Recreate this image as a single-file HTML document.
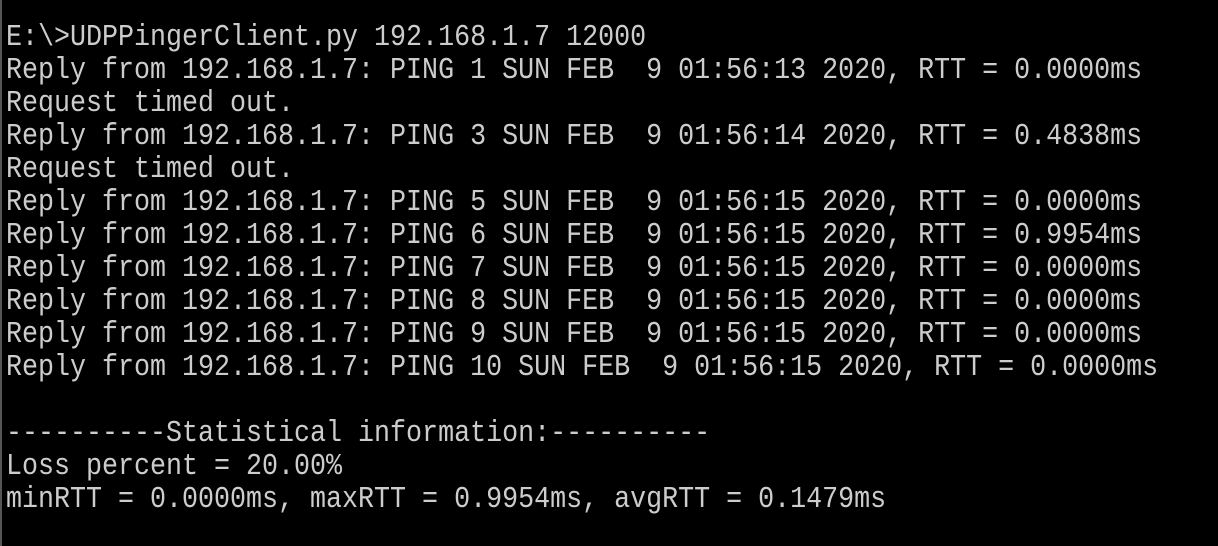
<!DOCTYPE html>
<html><head><style>
html,body{margin:0;padding:0;background:#000;width:1218px;height:546px;overflow:hidden}
pre{position:absolute;left:6px;top:21px;margin:0;font-family:"Liberation Mono",monospace;font-size:31px;line-height:33px;color:#cccccc;transform-origin:0 0;transform:scaleX(0.8602);white-space:pre}
.edge{position:absolute;left:0;top:0;width:2px;height:546px;background:#555}
</style></head><body>
<div class="edge"></div>
<pre>E:\&gt;UDPPingerClient.py 192.168.1.7 12000
Reply from 192.168.1.7: PING 1 SUN FEB  9 01:56:13 2020, RTT = 0.0000ms
Request timed out.
Reply from 192.168.1.7: PING 3 SUN FEB  9 01:56:14 2020, RTT = 0.4838ms
Request timed out.
Reply from 192.168.1.7: PING 5 SUN FEB  9 01:56:15 2020, RTT = 0.0000ms
Reply from 192.168.1.7: PING 6 SUN FEB  9 01:56:15 2020, RTT = 0.9954ms
Reply from 192.168.1.7: PING 7 SUN FEB  9 01:56:15 2020, RTT = 0.0000ms
Reply from 192.168.1.7: PING 8 SUN FEB  9 01:56:15 2020, RTT = 0.0000ms
Reply from 192.168.1.7: PING 9 SUN FEB  9 01:56:15 2020, RTT = 0.0000ms
Reply from 192.168.1.7: PING 10 SUN FEB  9 01:56:15 2020, RTT = 0.0000ms

----------Statistical information:----------
Loss percent = 20.00%
minRTT = 0.0000ms, maxRTT = 0.9954ms, avgRTT = 0.1479ms</pre>
</body></html>
